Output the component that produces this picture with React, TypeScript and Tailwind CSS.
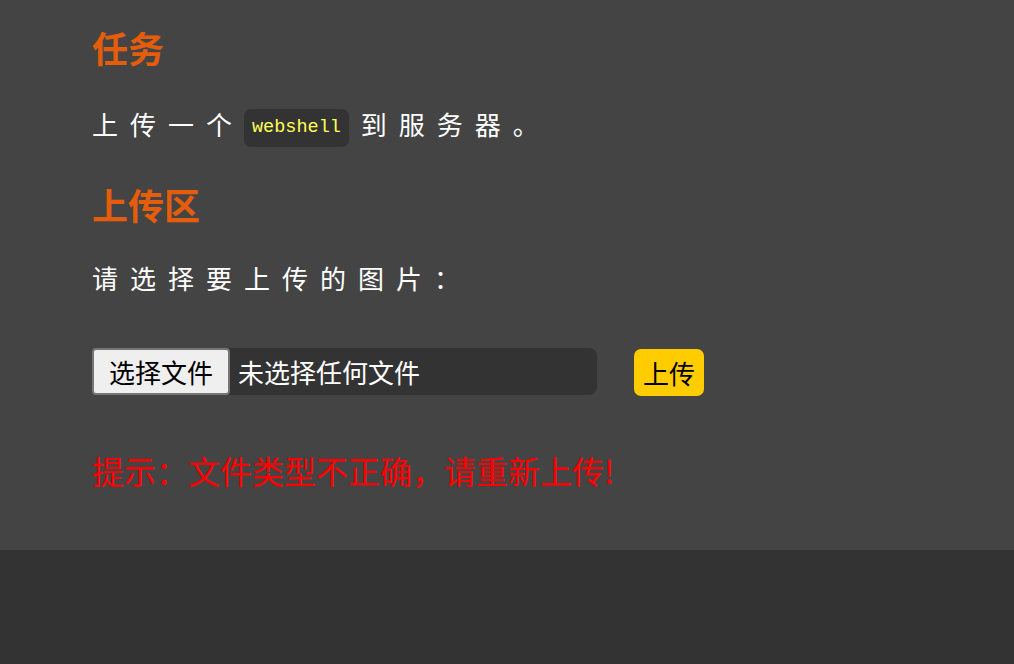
import React from "react";

export default function App() {
  const cjk = { fontFamily: '"Noto Sans CJK SC", "Noto Sans", sans-serif' };
  return (
    <div className="w-[1014px] h-[664px] bg-[#333333] flex flex-col" style={cjk}>
      <div className="h-[550px] bg-[#444444] pl-[92px] pt-[21px]">
        <h2 className="text-[36px] font-bold leading-[52px] text-[#e35d0c]">任务</h2>
        <p className="mt-[31px] h-[40px] text-[26px] leading-[40px] text-white tracking-[12px] flex items-center">
          上传一个
          <code className="mt-[7px] mr-[12px] bg-[#333333] rounded-[7px] px-[8px] h-[38px] flex items-center text-[18.5px] tracking-normal text-[#ffff55]" style={{ fontFamily: '"Liberation Mono", monospace' }}>
            webshell
          </code>
          到服务器。
        </p>
        <h2 className="mt-[34px] text-[36px] font-bold leading-[52px] text-[#e35d0c]">上传区</h2>
        <p className="mt-[28px] text-[26px] leading-[40px] text-white tracking-[12px]">请选择要上传的图片：</p>
        <div className="mt-[50px] h-[47px] flex items-start">
          <div className="w-[505px] h-[47px] bg-[#333333] rounded-[8px] flex items-center">
            <div className="h-[47px] w-[138px] bg-[#efefef] border-2 border-[#767676] rounded-[4px] flex items-center justify-center text-[26px] text-black">
              选择文件
            </div>
            <span className="ml-[8px] text-[26px] text-white">未选择任何文件</span>
          </div>
          <button className="ml-[37px] mt-[1px] h-[47px] w-[70px] bg-[#ffcc00] rounded-[7px] text-[26px] text-black flex items-center justify-center">
            上传
          </button>
        </div>
        <p className="mt-[53px] text-[32px] leading-[44px] text-[#ff0000]">提示：文件类型不正确，请重新上传!</p>
      </div>
    </div>
  );
}
